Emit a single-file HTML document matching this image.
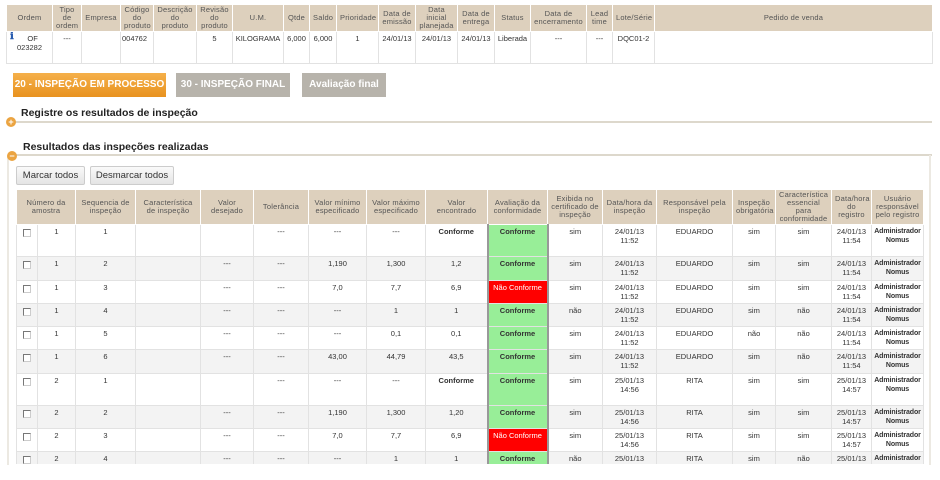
<!DOCTYPE html>
<html><head><meta charset="utf-8"><style>
*{margin:0;padding:0;box-sizing:border-box}
body{width:940px;height:480px;background:#fff;font-family:"Liberation Sans",Arial,sans-serif;font-size:7.5px;color:#333;position:relative;overflow:hidden}
table{border-collapse:collapse;table-layout:fixed;position:absolute}
td,th{border:1px solid #e2e2e2;text-align:center;vertical-align:top;padding:2px 1px;line-height:9px;overflow:hidden;font-weight:normal}
th{background:#ddd0bd;border-color:#fff;vertical-align:middle;color:#555;font-size:7.5px;letter-spacing:0.2px;padding:0 3px;line-height:8px}
.tab{position:absolute;top:73px;height:24px;color:#fff;font-weight:bold;font-size:10px;line-height:24px;text-align:center}
.h{position:absolute;font-weight:bold;font-size:10.5px;color:#222}
.line{position:absolute;height:2px;background:#ddd8cc}
.circ{position:absolute;width:10px;height:10px;border-radius:50%;background:#eba441;color:#fff;font-size:9px;line-height:10px;text-align:center;font-weight:bold}
.btn{position:absolute;top:166px;height:19px;border:1px solid #ccc;background:linear-gradient(#fafafa,#e4e4e4);font-size:9.5px;line-height:17px;text-align:center;color:#333;border-radius:2px}
.cb{display:inline-block;width:8px;height:8px;border:1px solid #777;border-right-color:#ccc;border-bottom-color:#ccc;background:#fff;margin-top:2px}
.g{background:#98ee98;font-weight:bold;border-left:2px solid #999;border-right:2px solid #999}
.r{background:#f00;color:#fff;border-left:2px solid #999;border-right:2px solid #999}
tr.a td{background:#f3f3f3}
tr.a td.g{background:#98ee98}tr.a td.r{background:#f00}
b{font-weight:bold}
.u{font-weight:bold;font-size:7px;letter-spacing:-0.1px}
</style></head><body>
<table style="left:6px;top:4px;width:926px">
<colgroup><col style="width:46px"><col style="width:29px"><col style="width:39px"><col style="width:33px"><col style="width:43px"><col style="width:36px"><col style="width:51px"><col style="width:26px"><col style="width:27px"><col style="width:42px"><col style="width:37px"><col style="width:42px"><col style="width:37px"><col style="width:36px"><col style="width:56px"><col style="width:26px"><col style="width:42px"><col style="width:278px"></colgroup>
<tr style="height:27px"><th>Ordem</th><th>Tipo de ordem</th><th>Empresa</th><th>Código do produto</th><th>Descrição do produto</th><th>Revisão do produto</th><th>U.M.</th><th>Qtde</th><th>Saldo</th><th>Prioridade</th><th>Data de emissão</th><th>Data inicial planejada</th><th>Data de entrega</th><th>Status</th><th>Data de encerramento</th><th>Lead time</th><th>Lote/Série</th><th>Pedido de venda</th></tr>
<tr style="height:32px"><td style="position:relative"><span style="position:absolute;left:3px;top:0;color:#2a5db0;font-weight:bold;font-size:10px">ℹ</span>&nbsp;&nbsp;&nbsp;OF<br>023282</td><td>---</td><td></td><td style="text-align:left">004762</td><td></td><td>5</td><td>KILOGRAMA</td><td>6,000</td><td>6,000</td><td>1</td><td>24/01/13</td><td>24/01/13</td><td>24/01/13</td><td>Liberada</td><td>---</td><td>---</td><td>DQC01-2</td><td></td></tr>
</table>
<div class="tab" style="left:13px;width:153px;background:linear-gradient(#f5b04a,#e8921f)">20 - INSPEÇÃO EM PROCESSO</div>
<div class="tab" style="left:176px;width:114px;background:#b7b3ab">30 - INSPEÇÃO FINAL</div>
<div class="tab" style="left:302px;width:84px;background:#b7b3ab">Avaliação final</div>
<div class="h" style="left:21px;top:107px">Registre os resultados de inspeção</div>
<div class="line" style="left:14px;top:121px;width:918px"></div>
<div class="circ" style="left:6px;top:117px">+</div>
<div class="h" style="left:23px;top:141px">Resultados das inspeções realizadas</div>
<div class="line" style="left:14px;top:154px;width:918px"></div>
<div style="position:absolute;left:7px;top:155px;width:924px;height:310px;border-left:2px solid #ece9e2;border-right:2px solid #ece9e2"></div>
<div class="circ" style="left:7px;top:151px">−</div>
<div class="btn" style="left:16px;width:69px">Marcar todos</div>
<div class="btn" style="left:90px;width:84px">Desmarcar todos</div>
<div style="position:absolute;left:0;top:189px;width:940px;height:275px;overflow:hidden">
<table style="left:16px;top:0;width:907px">
<colgroup><col style="width:21px"><col style="width:38px"><col style="width:60px"><col style="width:65px"><col style="width:53px"><col style="width:55px"><col style="width:58px"><col style="width:59px"><col style="width:62px"><col style="width:60px"><col style="width:55px"><col style="width:54px"><col style="width:76px"><col style="width:43px"><col style="width:56px"><col style="width:40px"><col style="width:52px"></colgroup>
<tr style="height:35px"><th colspan="2">Número da amostra</th><th>Sequencia de inspeção</th><th>Característica de inspeção</th><th>Valor desejado</th><th>Tolerância</th><th>Valor mínimo especificado</th><th>Valor máximo especificado</th><th>Valor encontrado</th><th>Avaliação da conformidade</th><th>Exibida no certificado de inspeção</th><th>Data/hora da inspeção</th><th>Responsável pela inspeção</th><th>Inspeção obrigatória</th><th>Característica essencial para conformidade</th><th>Data/hora do registro</th><th>Usuário responsável pelo registro</th></tr>
<tr style="height:32px"><td><span class="cb"></span></td><td>1</td><td>1</td><td></td><td></td><td>---</td><td>---</td><td>---</td><td><b>Conforme</b></td><td class="g">Conforme</td><td>sim</td><td>24/01/13<br>11:52</td><td>EDUARDO</td><td>sim</td><td>sim</td><td>24/01/13<br>11:54</td><td class="u">Administrador<br>Nomus</td></tr>
<tr class="a" style="height:24px"><td><span class="cb"></span></td><td>1</td><td>2</td><td></td><td>---</td><td>---</td><td>1,190</td><td>1,300</td><td>1,2</td><td class="g">Conforme</td><td>sim</td><td>24/01/13<br>11:52</td><td>EDUARDO</td><td>sim</td><td>sim</td><td>24/01/13<br>11:54</td><td class="u">Administrador<br>Nomus</td></tr>
<tr style="height:23px"><td><span class="cb"></span></td><td>1</td><td>3</td><td></td><td>---</td><td>---</td><td>7,0</td><td>7,7</td><td>6,9</td><td class="r">Não Conforme</td><td>sim</td><td>24/01/13<br>11:52</td><td>EDUARDO</td><td>sim</td><td>sim</td><td>24/01/13<br>11:54</td><td class="u">Administrador<br>Nomus</td></tr>
<tr class="a" style="height:23px"><td><span class="cb"></span></td><td>1</td><td>4</td><td></td><td>---</td><td>---</td><td>---</td><td>1</td><td>1</td><td class="g">Conforme</td><td>não</td><td>24/01/13<br>11:52</td><td>EDUARDO</td><td>sim</td><td>não</td><td>24/01/13<br>11:54</td><td class="u">Administrador<br>Nomus</td></tr>
<tr style="height:22px"><td><span class="cb"></span></td><td>1</td><td>5</td><td></td><td>---</td><td>---</td><td>---</td><td>0,1</td><td>0,1</td><td class="g">Conforme</td><td>sim</td><td>24/01/13<br>11:52</td><td>EDUARDO</td><td>não</td><td>não</td><td>24/01/13<br>11:54</td><td class="u">Administrador<br>Nomus</td></tr>
<tr class="a" style="height:24px"><td><span class="cb"></span></td><td>1</td><td>6</td><td></td><td>---</td><td>---</td><td>43,00</td><td>44,79</td><td>43,5</td><td class="g">Conforme</td><td>sim</td><td>24/01/13<br>11:52</td><td>EDUARDO</td><td>sim</td><td>não</td><td>24/01/13<br>11:54</td><td class="u">Administrador<br>Nomus</td></tr>
<tr style="height:32px"><td><span class="cb"></span></td><td>2</td><td>1</td><td></td><td></td><td>---</td><td>---</td><td>---</td><td><b>Conforme</b></td><td class="g">Conforme</td><td>sim</td><td>25/01/13<br>14:56</td><td>RITA</td><td>sim</td><td>sim</td><td>25/01/13<br>14:57</td><td class="u">Administrador<br>Nomus</td></tr>
<tr class="a" style="height:23px"><td><span class="cb"></span></td><td>2</td><td>2</td><td></td><td>---</td><td>---</td><td>1,190</td><td>1,300</td><td>1,20</td><td class="g">Conforme</td><td>sim</td><td>25/01/13<br>14:56</td><td>RITA</td><td>sim</td><td>sim</td><td>25/01/13<br>14:57</td><td class="u">Administrador<br>Nomus</td></tr>
<tr style="height:23px"><td><span class="cb"></span></td><td>2</td><td>3</td><td></td><td>---</td><td>---</td><td>7,0</td><td>7,7</td><td>6,9</td><td class="r">Não Conforme</td><td>sim</td><td>25/01/13<br>14:56</td><td>RITA</td><td>sim</td><td>sim</td><td>25/01/13<br>14:57</td><td class="u">Administrador<br>Nomus</td></tr>
<tr class="a" style="height:23px"><td><span class="cb"></span></td><td>2</td><td>4</td><td></td><td>---</td><td>---</td><td>---</td><td>1</td><td>1</td><td class="g">Conforme</td><td>não</td><td>25/01/13<br>14:56</td><td>RITA</td><td>sim</td><td>não</td><td>25/01/13<br>14:57</td><td class="u">Administrador<br>Nomus</td></tr>
</table></div>
</body></html>
